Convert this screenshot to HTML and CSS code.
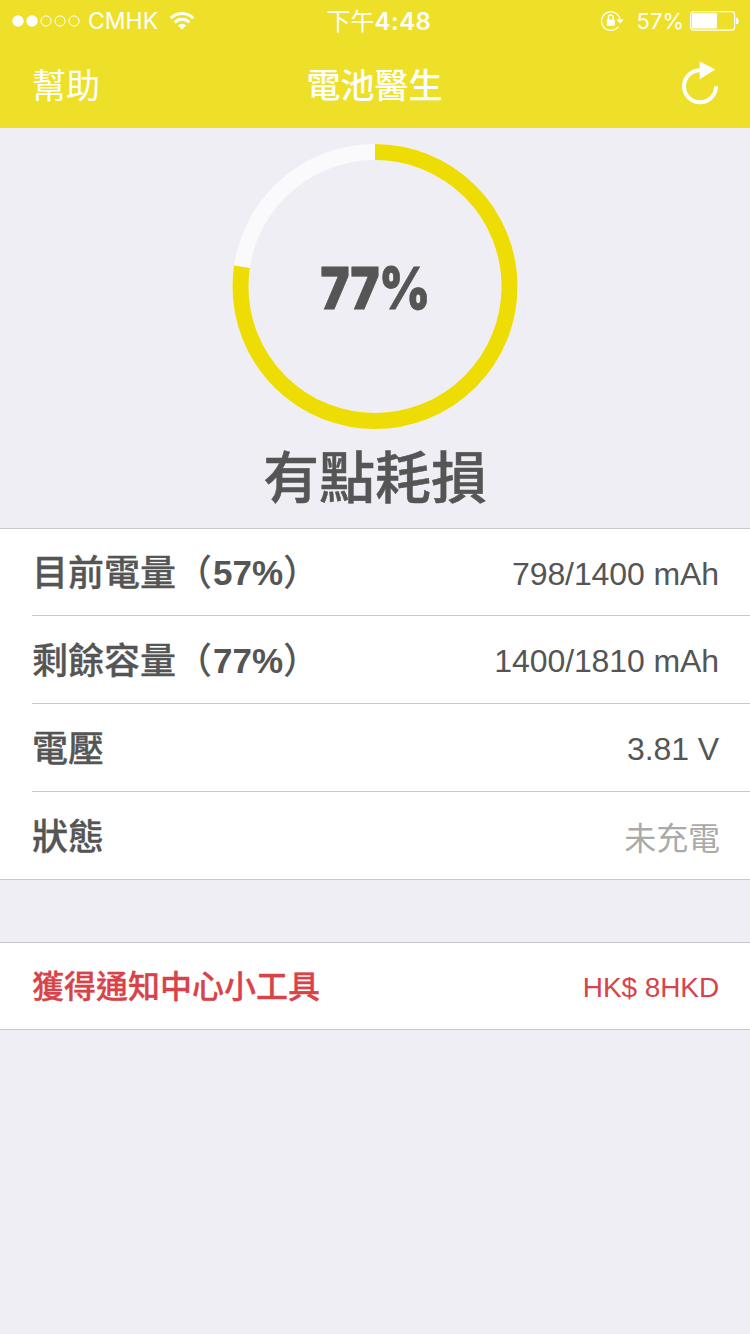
FILE: index.html
```
<!DOCTYPE html>
<html lang="zh-Hant">

<head>
    <meta charset="UTF-8">
    <meta name="viewport" content="width=device-width, initial-scale=1.0">
    <title>電池醫生</title>

    <link rel="stylesheet" href="styles.css">
</head>

<body>
    <header class="header">
        <div class="status-bar">
            <div class="status-left">
                <svg class="signal" width="68" height="12" viewBox="0 0 68 12">
                    <circle cx="6" cy="6" r="5.7" fill="#fff" />
                    <circle cx="20" cy="6" r="5.7" fill="#fff" />
                    <circle cx="34" cy="6" r="5.1" fill="none" stroke="#fff" />
                    <circle cx="48" cy="6" r="5.1" fill="none" stroke="#fff" />
                    <circle cx="62" cy="6" r="5.1" fill="none" stroke="#fff" />
                </svg>
                <span class="carrier">CMHK</span>
                <svg class="wifi" width="26" height="18" viewBox="0 0 26 18">
                    <path d="M1.8 6.2 A15.8 15.8 0 0 1 24.2 6.2" fill="none" stroke="#fff" stroke-width="3.1" />
                    <path d="M5.7 10.4 A10.3 10.3 0 0 1 20.3 10.4" fill="none" stroke="#fff" stroke-width="3" />
                    <path d="M8.8 13.4 A6 6 0 0 1 17.2 13.4 L13 17.6 Z" fill="#fff" />
                </svg>
            </div>
            <div class="time">下午<span>4:48</span></div>
            <div class="status-right">
                <svg class="lock" width="24" height="22" viewBox="0 0 24 22">
                    <path d="M18.3 16.6 A9.3 9.3 0 1 1 20 9.8" fill="none" stroke="#fff" stroke-width="1.3" />
                    <path d="M16.4 9.4 H23.8 L20.1 13.6 Z" fill="#fff" />
                    <rect x="6.8" y="9.4" width="8" height="6.3" rx="0.8" fill="#fff" />
                    <path d="M8.4 9.7 V7.4 A2.4 2.4 0 0 1 13.2 7.4 V9.7" fill="none" stroke="#fff" stroke-width="1.4" />
                </svg>
                <span class="percent">57%</span>
                <svg class="battery" width="50" height="20" viewBox="0 0 50 20">
                    <rect x="0.6" y="0.7" width="44" height="18.4" rx="3" fill="none" stroke="#fff" stroke-width="1.2" />
                    <rect x="2" y="2.2" width="25" height="15.4" rx="1" fill="#fff" />
                    <path d="M46 6.5 Q48.7 7 48.7 10 T46 13.5 Z" fill="#fff" />
                </svg>
            </div>
        </div>
        <nav class="nav-bar">
            <a class="help" href="#">幫助</a>
            <h1>電池醫生</h1>
            <button class="refresh" type="button" aria-label="重新整理">
                <svg width="40" height="46" viewBox="0 0 40 46">
                    <path d="M36 26.3 A16 16 0 1 1 20 10.3" fill="none" stroke="#fff" stroke-width="4" />
                    <path d="M19.7 1.5 L35.3 9.5 L19.7 19.2 Z" fill="#fff" />
                </svg>
            </button>
        </nav>
    </header>

    <main>
        <section class="health">
            <div class="gauge">
                <svg width="286" height="287" viewBox="0 0 286 287">
                    <circle class="track" cx="143" cy="143.5" r="134.5" />
                    <circle class="level" cx="143" cy="143.5" r="134.5" pathLength="100" stroke-dasharray="77.35 22.65" transform="rotate(-90 143 143.5)" />
                </svg>
                <span class="gauge-value">77%</span>
            </div>
            <p class="verdict">有點耗損</p>
        </section>

        <ul class="list">
            <li>
                <span class="name">目前電量<span class="paren">（</span><b>57%</b><span class="paren">）</span></span>
                <span class="value">798/1400 mAh</span>
            </li>
            <li>
                <span class="name">剩餘容量<span class="paren">（</span><b>77%</b><span class="paren">）</span></span>
                <span class="value">1400/1810 mAh</span>
            </li>
            <li>
                <span class="name">電壓</span>
                <span class="value">3.81 V</span>
            </li>
            <li>
                <span class="name">狀態</span>
                <span class="value muted">未充電</span>
            </li>
        </ul>

        <ul class="list purchase">
            <li>
                <span class="name">獲得通知中心小工具</span>
                <span class="value">HK$ 8HKD</span>
            </li>
        </ul>
    </main>
</body>

</html>
```
FILE: styles.css
```
* {
    box-sizing: border-box;
}

body {
    font-family: "Liberation Sans", "Noto Sans CJK TC", sans-serif;
    margin: 0;
    min-height: 1334px;
    background-color: #efeef5;
    color: #555;
}

.header {
    height: 128px;
    background-color: #eedf29;
    color: #fff;
}

.status-bar {
    display: grid;
    grid-template-columns: 1fr auto 1fr;
    align-items: start;
    height: 41px;
    padding: 1px 10px 0 12px;
    font-family: Inter, "Noto Sans CJK TC", sans-serif;
    font-size: 23px;
    line-height: 40px;
}

.status-left,
.status-right {
    display: flex;
    align-items: center;
    height: 40px;
}

.status-right {
    justify-content: flex-end;
}

.carrier {
    margin: 0 11px 0 8px;
}

.time {
    padding: 1px 0 0 6px;
    font-size: 24px;
}

.time span {
    font-weight: 600;
    letter-spacing: 0.5px;
}

.percent {
    margin: 0 6px 0 13px;
    font-size: 22px;
}

.nav-bar {
    display: grid;
    grid-template-columns: 1fr auto 1fr;
    align-items: center;
    height: 87px;
    padding: 0 30px 3px 32px;
}

.help {
    color: #fff;
    font-size: 34px;
    text-decoration: none;
}

h1 {
    margin: 0 3px 0 0;
    font-size: 34px;
    font-weight: 500;
}

.refresh {
    justify-self: end;
    height: 46px;
    padding: 0;
    border: none;
    background: none;
}

.refresh svg {
    display: block;
}

.health {
    display: flex;
    flex-direction: column;
    align-items: center;
    height: 400px;
    padding-top: 15px;
}

.gauge {
    display: grid;
    place-items: center;
    height: 287px;
}

.gauge svg,
.gauge-value {
    grid-area: 1 / 1;
}

.gauge circle {
    fill: none;
    stroke-width: 16;
}

.gauge .track {
    stroke: #fafafd;
}

.gauge .level {
    stroke: #eedc05;
}

.gauge-value {
    padding-top: 2px;
    font-family: Inter, sans-serif;
    font-size: 58px;
    font-weight: 900;
    transform: scaleX(0.84);
    -webkit-text-stroke: 0.8px;
}

.verdict {
    margin: 0;
    font-size: 56px;
    font-weight: 500;
    line-height: 98px;
    -webkit-text-stroke: 0.5px;
}

.list {
    margin: 0 0 62px;
    padding: 0 0 0 32px;
    border-top: 1px solid #c8c7cc;
    border-bottom: 1px solid #c8c7cc;
    background-color: #fff;
    list-style: none;
}

.list li {
    display: flex;
    align-items: center;
    justify-content: space-between;
    height: 88px;
    padding-right: 31px;
    border-bottom: 1px solid #c8c7cc;
}

.list li:first-child {
    height: 87px;
}

.list li:last-child {
    height: 87px;
    border-bottom: none;
}

.name {
    padding-bottom: 4px;
    font-size: 36px;
    font-weight: 500;
    -webkit-text-stroke: 0.3px;
}

.name b {
    margin-left: 1px;
    font-size: 35px;
    line-height: 1;
    vertical-align: 1px;
    -webkit-text-stroke: 0;
}

.paren {
    font-family: "Noto Sans CJK SC", sans-serif;
    -webkit-text-stroke: 0;
}

.value {
    padding-top: 4px;
    font-size: 32px;
    letter-spacing: -0.1px;
}

.muted {
    padding-top: 1px;
    margin-right: -1px;
    color: #aaa;
}

.purchase {
    margin: 0;
    color: #d8434a;
}

.purchase li:last-child {
    height: 86px;
}

.purchase .name {
    font-size: 32px;
}

.purchase .value {
    padding-top: 3px;
    font-size: 28px;
}
```
